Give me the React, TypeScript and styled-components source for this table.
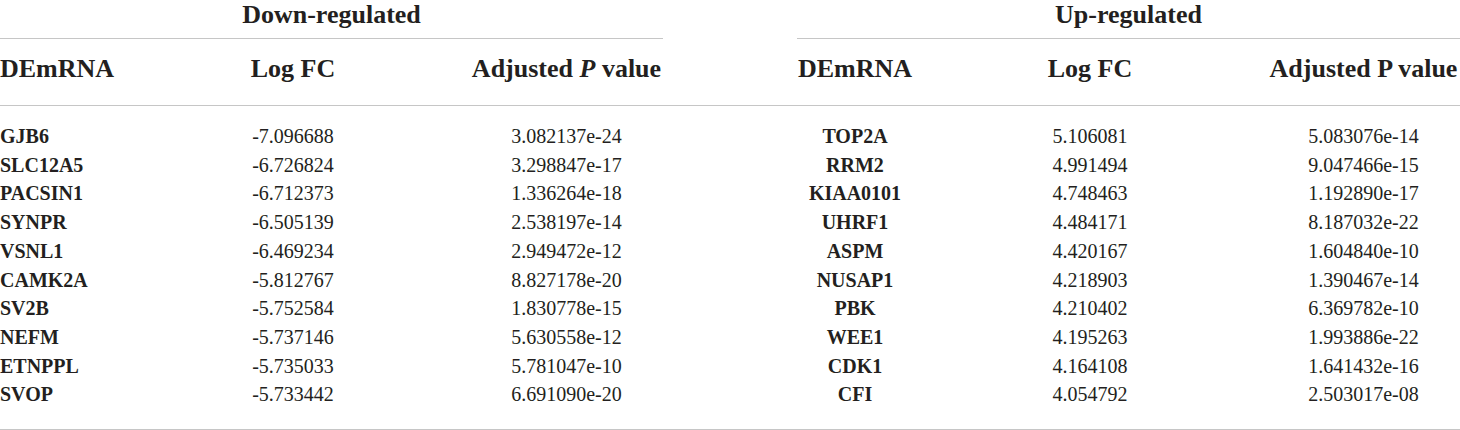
import React from "react";
import styled, { createGlobalStyle } from "styled-components";

const Global = createGlobalStyle`
  html, body { margin: 0; padding: 0; background: #ffffff; }
  body { font-family: "Liberation Serif", "Times New Roman", serif; color: #231f20; }
`;

const Page = styled.div`
  width: 1460px;
  display: flex;
  flex-direction: column;
`;

const Band = styled.div<{ $line?: boolean }>`
  display: flex;
  justify-content: space-between;
  border-bottom: ${(p) => (p.$line ? "1px solid #c6c6c6" : "none")};
`;

const GroupTitle = styled.div`
  width: 663px;
  text-align: center;
  font-weight: 700;
  font-size: 26px;
  line-height: 29px;
  padding-bottom: 9px;
  border-bottom: 1px solid #c6c6c6;
`;

const HeaderBand = styled(Band)`
  padding: 16px 0 23px;
`;

const BodyBand = styled(Band)`
  padding: 16px 0 20px;
`;

const Grid = styled.div`
  width: 663px;
  display: grid;
  grid-template-columns: 116px 354px 193px;
`;

const HeadCell = styled.div<{ $align: "left" | "center" }>`
  font-weight: 700;
  font-size: 26px;
  line-height: 27px;
  text-align: ${(p) => p.$align};
  white-space: nowrap;
`;

const Cell = styled.div<{ $align: "left" | "center"; $bold?: boolean }>`
  font-size: 20px;
  line-height: 28.7px;
  font-weight: ${(p) => (p.$bold ? 700 : 400)};
  text-align: ${(p) => p.$align};
  white-space: nowrap;
`;

type Row = [string, string, string];

const down: Row[] = [
  ["GJB6", "-7.096688", "3.082137e-24"],
  ["SLC12A5", "-6.726824", "3.298847e-17"],
  ["PACSIN1", "-6.712373", "1.336264e-18"],
  ["SYNPR", "-6.505139", "2.538197e-14"],
  ["VSNL1", "-6.469234", "2.949472e-12"],
  ["CAMK2A", "-5.812767", "8.827178e-20"],
  ["SV2B", "-5.752584", "1.830778e-15"],
  ["NEFM", "-5.737146", "5.630558e-12"],
  ["ETNPPL", "-5.735033", "5.781047e-10"],
  ["SVOP", "-5.733442", "6.691090e-20"],
];

const up: Row[] = [
  ["TOP2A", "5.106081", "5.083076e-14"],
  ["RRM2", "4.991494", "9.047466e-15"],
  ["KIAA0101", "4.748463", "1.192890e-17"],
  ["UHRF1", "4.484171", "8.187032e-22"],
  ["ASPM", "4.420167", "1.604840e-10"],
  ["NUSAP1", "4.218903", "1.390467e-14"],
  ["PBK", "4.210402", "6.369782e-10"],
  ["WEE1", "4.195263", "1.993886e-22"],
  ["CDK1", "4.164108", "1.641432e-16"],
  ["CFI", "4.054792", "2.503017e-08"],
];

const Body: React.FC<{ rows: Row[]; first: "left" | "center" }> = ({ rows, first }) => (
  <Grid>
    {rows.map((r) => (
      <React.Fragment key={r[0]}>
        <Cell $align={first} $bold>{r[0]}</Cell>
        <Cell $align="center">{r[1]}</Cell>
        <Cell $align="center">{r[2]}</Cell>
      </React.Fragment>
    ))}
  </Grid>
);

export default function App() {
  return (
    <Page>
      <Global />
      <Band>
        <GroupTitle>Down-regulated</GroupTitle>
        <GroupTitle>Up-regulated</GroupTitle>
      </Band>
      <HeaderBand $line>
        <Grid>
          <HeadCell $align="left">DEmRNA</HeadCell>
          <HeadCell $align="center">Log FC</HeadCell>
          <HeadCell $align="center">
            Adjusted <i>P</i> value
          </HeadCell>
        </Grid>
        <Grid>
          <HeadCell $align="center">DEmRNA</HeadCell>
          <HeadCell $align="center">Log FC</HeadCell>
          <HeadCell $align="center">Adjusted P value</HeadCell>
        </Grid>
      </HeaderBand>
      <BodyBand $line>
        <Body rows={down} first="left" />
        <Body rows={up} first="center" />
      </BodyBand>
    </Page>
  );
}
